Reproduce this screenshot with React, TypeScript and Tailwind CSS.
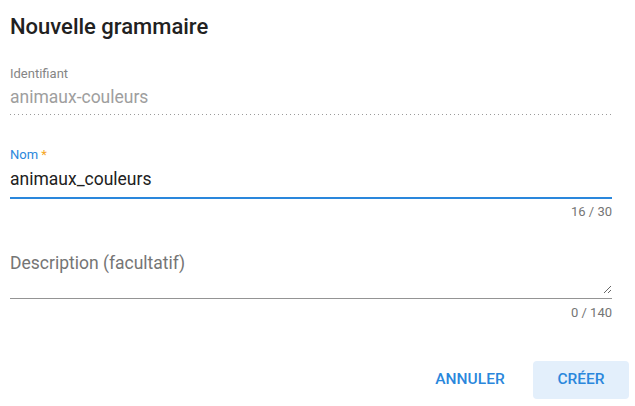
import React from 'react';

const App: React.FC = () => {
  return (
    <div className="w-[635px] h-[406px] bg-white font-['Roboto',sans-serif] pl-[10px] overflow-hidden">
      <h2 className="pt-[13px] text-[22px] leading-7 font-medium text-[#212121]">Nouvelle grammaire</h2>

      <div className="w-[602px]">
        {/* Identifiant (disabled) */}
        <div className="mt-[26px]">
          <div className="text-[13px] leading-[14px] text-[#858585]">Identifiant</div>
          <div className="mt-[6px] text-[17.5px] leading-5 text-[#9e9e9e]">animaux-couleurs</div>
          <div className="mt-[7px] h-px bg-[linear-gradient(to_right,#9a9a9a_1px,transparent_1px)] bg-[length:4px_1px] bg-repeat-x" />
        </div>

        {/* Nom */}
        <div className="mt-[33px]">
          <div className="text-[13px] leading-[14px] text-[#2a87dc]">
            Nom <span className="text-[#f5a623]">*</span>
          </div>
          <input
            defaultValue="animaux_couleurs"
            className="mt-[7px] block w-full text-[17.5px] leading-5 text-[#212121] outline-none bg-transparent p-0"
          />
          <div className="mt-[8px] h-[2px] bg-[#2a87dc]" />
          <div className="mt-[6px] text-right text-[13px] leading-[14px] text-[#757575]">16 / 30</div>
        </div>

        {/* Description */}
        <div className="mt-[34px] border-b border-[#949494] pb-[4px]">
          <textarea
            placeholder="Description (facultatif)"
            className="block w-full h-[41px] text-[17.5px] leading-5 text-[#212121] placeholder:text-[#757575] outline-none resize-y p-0 bg-transparent"
          />
        </div>
        <div className="mt-[7px] text-right text-[13px] leading-[14px] text-[#757575]">0 / 140</div>
      </div>

      <div className="mt-[41px] flex justify-end gap-[15px] pr-[6px]">
        <button className="w-[96px] h-[38px] rounded text-[15.5px] font-medium text-[#2a87dc] uppercase">
          Annuler
        </button>
        <button className="w-[96px] h-[38px] rounded bg-[#e3effb] text-[15.5px] font-medium text-[#2a87dc] uppercase">
          Créer
        </button>
      </div>
    </div>
  );
};

export default App;
